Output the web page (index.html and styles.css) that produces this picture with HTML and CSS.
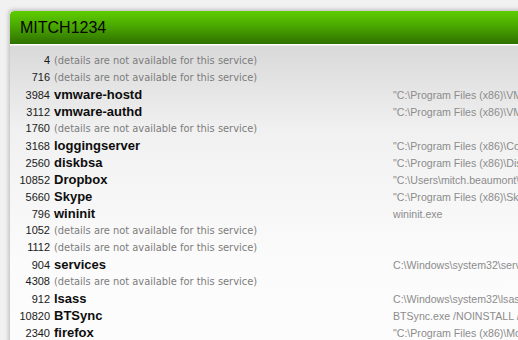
FILE: index.html
```html
<!DOCTYPE html>
<html>
<head>
<meta charset="utf-8">
<link rel="stylesheet" href="styles.css">
</head>
<body>
<div class="panel">
  <div class="header"><h1 class="title">MITCH1234</h1></div>
  <div class="list">
    <div class="row"><span class="pid">4</span><span class="na">(details are not available for this service)</span></div>
    <div class="row"><span class="pid">716</span><span class="na">(details are not available for this service)</span></div>
    <div class="row"><span class="pid">3984</span><span class="name">vmware-hostd</span><span class="path">"C:\Program Files (x86)\VMware\VMware Workstation\vmware-hostd.exe"</span></div>
    <div class="row"><span class="pid">3112</span><span class="name">vmware-authd</span><span class="path">"C:\Program Files (x86)\VMware\VMware Workstation\vmware-authd.exe"</span></div>
    <div class="row"><span class="pid">1760</span><span class="na">(details are not available for this service)</span></div>
    <div class="row"><span class="pid">3168</span><span class="name">loggingserver</span><span class="path">"C:\Program Files (x86)\Common Files\logging\loggingserver.exe"</span></div>
    <div class="row"><span class="pid">2560</span><span class="name">diskbsa</span><span class="path">"C:\Program Files (x86)\Diskeeper\diskbsa.exe"</span></div>
    <div class="row"><span class="pid">10852</span><span class="name">Dropbox</span><span class="path">"C:\Users\mitch.beaumont\AppData\Roaming\Dropbox\bin\Dropbox.exe"</span></div>
    <div class="row"><span class="pid">5660</span><span class="name">Skype</span><span class="path">"C:\Program Files (x86)\Skype\Phone\Skype.exe"</span></div>
    <div class="row"><span class="pid">796</span><span class="name">wininit</span><span class="path">wininit.exe</span></div>
    <div class="row"><span class="pid">1052</span><span class="na">(details are not available for this service)</span></div>
    <div class="row"><span class="pid">1112</span><span class="na">(details are not available for this service)</span></div>
    <div class="row"><span class="pid">904</span><span class="name">services</span><span class="path">C:\Windows\system32\services.exe</span></div>
    <div class="row"><span class="pid">4308</span><span class="na">(details are not available for this service)</span></div>
    <div class="row"><span class="pid">912</span><span class="name">lsass</span><span class="path">C:\Windows\system32\lsass.exe</span></div>
    <div class="row"><span class="pid">10820</span><span class="name">BTSync</span><span class="path">BTSync.exe /NOINSTALL /SILENT</span></div>
    <div class="row"><span class="pid">2340</span><span class="name">firefox</span><span class="path">"C:\Program Files (x86)\Mozilla Firefox\firefox.exe"</span></div>
  </div>
</div>
</body>
</html>
```
FILE: styles.css
```css
html, body {
  margin: 0;
  padding: 0;
  overflow: hidden;
  height: 100%;
}
body {
  background: #f1f1f1;
  font-family: "Liberation Sans", Arial, sans-serif;
  padding: 11px 0 0 10px;
  box-sizing: border-box;
}
.panel {
  width: 560px;
  height: 400px;
  border-radius: 4px 0 0 0;
  background: linear-gradient(to bottom, #ffffff 0px, #ffffff 34px, #d9d9d9 35px, #f1f1f1 120px, #fbfbfb 250px, #fdfdfd 400px);
  box-shadow: -1px -1px 4px rgba(0, 0, 0, 0.25);
  overflow: hidden;
}
.header {
  height: 33px;
  background: linear-gradient(to bottom, #5fcd00 0%, #4aa800 45%, #2f7000 100%);
  border-bottom: 1px solid #ffffff;
  border-radius: 4px 0 0 0;
  display: flex;
  align-items: center;
  padding-left: 10px;
}
.title {
  margin: 0;
  font-size: 16px;
  font-weight: normal;
  color: #050505;
  line-height: 33px;
}
.list {
  padding-top: 7px;
}
.row {
  display: flex;
  align-items: baseline;
  height: 17px;
  line-height: 17px;
  white-space: nowrap;
}
.pid {
  width: 40px;
  text-align: right;
  font-size: 11px;
  color: #1a1a1a;
  flex: none;
}
.name {
  margin-left: 4px;
  width: 339px;
  flex: none;
  font-size: 13px;
  font-weight: bold;
  color: #0d0d0d;
}
.na {
  margin-left: 4px;
  font-family: "DejaVu Sans", Verdana, sans-serif;
  font-size: 9.9px;
  color: #7c7c7c;
}
.path {
  font-size: 10.6px;
  color: #8c8c8c;
}
```
